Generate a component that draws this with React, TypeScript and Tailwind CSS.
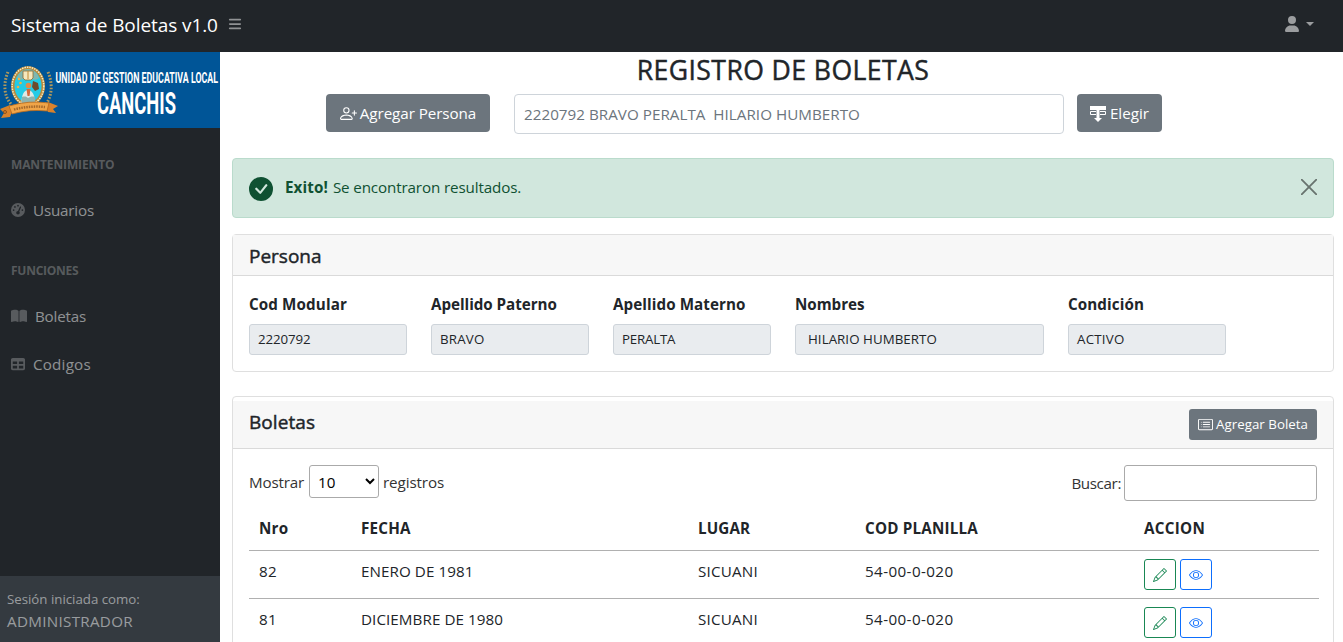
import React from "react";
import { BsPersonPlus, BsCardList, BsPencil, BsEye, BsCheckCircleFill } from "react-icons/bs";
import { FaBars, FaBookOpen, FaGaugeHigh, FaTable, FaUser } from "react-icons/fa6";

function Logo() {
  return (
    <svg width="220" height="76" viewBox="0 0 220 76" className="block shrink-0 overflow-visible">
      <rect width="220" height="76" fill="#005597" />
      <g fill="none" stroke="#b39a5c" strokeWidth="3" strokeDasharray="1.600 1.600">
        <path d="M8 20C3 32 4 44 11 52" />
        <path d="M48 20C53 32 52 44 46 52" />
      </g>
      <ellipse cx="28" cy="34" rx="17" ry="20" fill="#b98a3c" />
      <ellipse cx="28" cy="34" rx="15.800" ry="18.800" fill="none" stroke="#f5ecc8" strokeWidth="1.500" strokeDasharray="1.500 1" />
      <ellipse cx="28" cy="34" rx="13.500" ry="16.500" fill="#22cbe6" />
      <path d="M17 26c2-6 6-9 11-9s9 3 11 9c-3 3-6 1-11 1s-8 2-11-1Z" fill="#7fb7b0" />
      <path d="M23 19h10v7l-2 2h-6l-2-2Z" fill="#f5e8bd" stroke="#8b6a34" strokeWidth=".8" />
      <path d="M28 19v8" stroke="#c08a35" strokeWidth="1" />
      <circle cx="19" cy="27" r="1.300" fill="#f0b040" />
      <circle cx="20.500" cy="31" r="1.300" fill="#f0b040" />
      <circle cx="18" cy="35" r="1.300" fill="#f0b040" />
      <path d="M33 29l5 2 1 6-4 2-3-4Z" fill="#6d4a2b" />
      <circle cx="28.500" cy="33.500" r="2.800" fill="#e08a4a" />
      <path d="M21.500 51c0-8 2.500-13 6.500-13s7 5 7 13Z" fill="#dfe9e6" />
      <path d="M26.500 37h4l-1 7h-2Z" fill="#d4683c" />
      <path d="M22 45c3-1 5 0 6 1 2-1 4-2 7-1v6H22Z" fill="#8fb3ae" />
      <path d="M0 57l10-4 3 4-3 8-9 1 3-5Z" fill="#d9822b" />
      <path d="M58 54l-10-4-4 4 4 6 8 1-3-4Z" fill="#d9822b" />
      <path d="M9 54q20 -6 40 -3l-2 8q-18 -2 -35 3Z" fill="#f0a548" stroke="#b8691d" strokeWidth=".8" />
      <path d="M14 57.500q15-4 31-2.500" fill="none" stroke="#a3672a" strokeWidth="2.500" strokeDasharray="1.500 1" />
      <circle cx="5" cy="60" r="1.500" fill="none" stroke="#7a4518" strokeWidth=".8" />
      <g fill="#fff" fontFamily="Roboto, sans-serif" fontWeight="700">
        <text x="55.500" y="31" fontSize="15" textLength="162.500" lengthAdjust="spacingAndGlyphs">
          UNIDAD DE GESTION EDUCATIVA LOCAL
        </text>
        <text x="97" y="62" fontSize="31.500" textLength="79" lengthAdjust="spacingAndGlyphs">
          CANCHIS
        </text>
      </g>
    </svg>
  );
}

function PickIcon() {
  return (
    <svg width="16" height="16" viewBox="0 0 16 16" fill="currentColor" className="mt-[2px] block">
      <path d="M0 0h16v4H9.500v8H12l-4 4-4-4h2.500V4H0Z" />
      <path d="M6 5.500H.500v3H6M10 5.500h5.500v3H10" fill="none" stroke="currentColor" />
    </svg>
  );
}

type NavProps = { icon: React.ReactNode; label: string; className: string };

function NavItem({ icon, label, className }: NavProps) {
  return (
    <a className="flex h-12 items-center pl-[11px] text-[15.2px] text-white/50">
      <span className="mr-2 text-[14px] text-white/25">{icon}</span>
      <span className={className}>{label}</span>
    </a>
  );
}

const fields = [
  { label: "Cod Modular", value: "2220792", box: "w-[158px] pl-2", lt: "tracking-[0.12px]", vt: "tracking-[-0.1px]" },
  { label: "Apellido Paterno", value: "BRAVO", box: "w-[158px] pl-2", lt: "tracking-[-0.04px]", vt: "tracking-[0.22px]" },
  { label: "Apellido Materno", value: "PERALTA", box: "w-[158px] pl-2", lt: "tracking-[0.08px]", vt: "tracking-[-0.2px]" },
  { label: "Nombres", value: "HILARIO HUMBERTO", box: "w-[249px] pl-3", lt: "tracking-[-0.02px]", vt: "tracking-[0.06px]" },
  { label: "Condición", value: "ACTIVO", box: "w-[158px] pl-2", lt: "tracking-[0.1px]", vt: "tracking-[0.25px]" },
];

const boletas = [
  { nro: "82", fecha: "ENERO DE 1981", lugar: "SICUANI", cod: "54-00-0-020" },
  { nro: "81", fecha: "DICIEMBRE DE 1980", lugar: "SICUANI", cod: "54-00-0-020" },
];

const cols = "grid grid-cols-[102px_337px_167px_279px_1fr] pl-[10px]";
const medium = "[-webkit-text-stroke:0.45px_currentColor]";

export default function App() {
  return (
    <div className="flex h-[642px] w-[1343px] flex-col overflow-hidden bg-white font-['Open_Sans',sans-serif] text-[15.2px] text-[#212529]">
      <nav className="flex h-[52px] shrink-0 items-center bg-[#212529] pr-[29px] pl-[11px]">
        <span className="mb-[2px] text-[19px] tracking-[-0.08px] text-white">Sistema de Boletas v1.0</span>
        <FaBars className="mb-1 ml-[10px] text-[14px] text-white/50" />
        <span className="mb-1 ml-auto flex items-center text-white/55">
          <FaUser className="text-[16px]" />
          <span className="ml-[6px] border-x-[4px] border-t-[4px] border-x-transparent border-t-current" />
        </span>
      </nav>

      <div className="flex min-h-0 flex-1">
        <aside className="flex w-[220px] shrink-0 flex-col bg-[#212529]">
          <Logo />
          <div className="flex flex-1 flex-col">
            <div className="mt-[27px] flex h-5 items-center pl-[11px] text-[12px] font-bold tracking-[-0.12px] text-white/25">MANTENIMIENTO</div>
            <div className="h-[11px]" />
            <NavItem icon={<FaGaugeHigh />} label="Usuarios" className="tracking-[-0.18px]" />
            <div className="mt-[27px] flex h-5 items-center pl-[11px] text-[12px] font-bold tracking-[-0.26px] text-white/25">FUNCIONES</div>
            <div className="h-[11px]" />
            <NavItem icon={<FaBookOpen className="text-[16px]" />} label="Boletas" className="tracking-[-0.19px]" />
            <NavItem icon={<FaTable />} label="Codigos" className="tracking-[0.2px]" />
          </div>
          <div className="h-[66px] bg-[#343a40] pt-3 pl-[7px] text-white/50">
            <div className="pt-px text-[13.3px] leading-[20px] tracking-[-0.02px]">Sesión iniciada como:</div>
            <div className="leading-6 tracking-[0.3px]">ADMINISTRADOR</div>
          </div>
        </aside>

        <main className="flex min-w-0 flex-1 flex-col pr-[9px] pl-3">
          <h1 className={`flex h-[42px] items-center justify-center pb-[5px] text-[26.6px] tracking-[0.41px] ${medium}`}>REGISTRO DE BOLETAS</h1>

          <div className="flex items-start pl-[94px]">
            <button className="flex h-[38px] w-[164px] items-center justify-center gap-[3px] rounded bg-[#6c757d] text-white">
              <BsPersonPlus className="text-[17px]" />
              <span className="tracking-[-0.07px]">Agregar Persona</span>
            </button>
            <div className="ml-6 flex h-10 w-[550px] items-center rounded border border-[#ced4da] pl-[9px] tracking-[0.03px] text-[#6c757d]">
              2220792 BRAVO PERALTA&nbsp; HILARIO HUMBERTO
            </div>
            <button className="ml-[13px] flex h-[38px] w-[85px] items-center justify-center gap-1 rounded bg-[#6c757d] text-white">
              <PickIcon />
              <span className="tracking-[0.02px]">Elegir</span>
            </button>
          </div>

          <div className="mt-6 flex h-[60px] shrink-0 items-center rounded border border-[#badbcc] bg-[#d1e7dd] pr-4 pl-4 text-[#0f5132]">
            <BsCheckCircleFill className="mt-[2px] text-[24px]" />
            <span className="mb-px ml-[12px] font-bold tracking-[0.1px]">Exito!</span>
            <span className="mb-px ml-[5px] tracking-[-0.13px]">Se encontraron resultados.</span>
            <svg viewBox="0 0 16 16" className="mb-[2px] ml-auto h-4 w-4 text-black/50">
              <path d="M.700 .700l14.600 14.600M15.300 .700L.700 15.300" stroke="currentColor" strokeWidth="1.800" strokeLinecap="round" />
            </svg>
          </div>

          <section className="mt-4 h-[138px] shrink-0 rounded border border-[#dfdfdf]">
            <h2 className={`flex h-[41px] items-center border-b border-[#dadada] bg-[#f7f7f7] pt-[2px] pl-4 text-[19px] tracking-[0px] ${medium}`}>Persona</h2>
            <div className="flex gap-6 pt-4 pl-4">
              {fields.map((f) => (
                <div key={f.label}>
                  <div className={`h-8 leading-6 font-bold ${f.lt}`}>{f.label}</div>
                  <div className={`flex h-[31px] items-center rounded-[3px] border border-[#ced4da] bg-[#e9ecef] pt-px text-[13.3px] ${f.box} ${f.vt}`}>{f.value}</div>
                </div>
              ))}
            </div>
          </section>

          <section className="mt-6 h-[300px] shrink-0 rounded border border-[#dfdfdf] pt-1">
            <div className="flex h-12 items-start justify-between border-b border-[#dadada] bg-[#f7f7f7] pt-2 pr-4 pl-4">
              <h2 className={`text-[19px] leading-[26px] tracking-[0.08px] ${medium}`}>Boletas</h2>
              <button className="flex h-[31px] w-[128px] items-center justify-center gap-[3px] rounded-[3px] bg-[#6c757d] text-[13.3px] tracking-[0.03px] text-white">
                <BsCardList className="text-[15px]" />
                <span className="pt-px">Agregar Boleta</span>
              </button>
            </div>
            <div className="flex items-start pt-4 pr-4 pl-4 text-[#333]">
              <span className="w-[60px] leading-[35px] tracking-[-0.18px]">Mostrar</span>
              <select className="h-[33px] w-[70px] rounded-[3px] border border-[#aaa] bg-white pl-1 text-black">
                <option>10</option>
              </select>
              <span className="ml-[4px] leading-[35px] tracking-[-0.1px]">registros</span>
              <span className="ml-auto leading-[37px] tracking-[-0.38px]">Buscar:</span>
              <input className="ml-[3px] h-9 w-[193px] rounded-[3px] border border-[#aaa] bg-white" />
            </div>
            <div className="mr-[14px] ml-4">
              <div className={`${cols} h-[49px] items-center border-b border-[#b0b0b0] pt-[5px] font-bold`}>
                <span className="tracking-[0.2px]">Nro</span>
                <span className="tracking-[0.22px]">FECHA</span>
                <span className="tracking-[0.12px]">LUGAR</span>
                <span className="tracking-[0.2px]">COD PLANILLA</span>
                <span className="tracking-[0.3px]">ACCION</span>
              </div>
              {boletas.map((b) => (
                <div key={b.nro} className={`${cols} h-12 border-b border-[#b0b0b0] pt-2`}>
                  <span className="leading-6 tracking-[0.2px]">{b.nro}</span>
                  <span className="leading-6 tracking-[0.07px]">{b.fecha}</span>
                  <span className="leading-6 tracking-[0.2px]">{b.lugar}</span>
                  <span className="leading-6 tracking-[0.4px]">{b.cod}</span>
                  <span className="flex gap-1">
                    <button className="flex h-[31px] w-8 items-center justify-center rounded-[3px] border border-[#198754] text-[14px] text-[#198754]">
                      <BsPencil />
                    </button>
                    <button className="flex h-[31px] w-8 items-center justify-center rounded-[3px] border border-[#0d6efd] text-[14px] text-[#0d6efd]">
                      <BsEye />
                    </button>
                  </span>
                </div>
              ))}
            </div>
          </section>
        </main>
      </div>
    </div>
  );
}
